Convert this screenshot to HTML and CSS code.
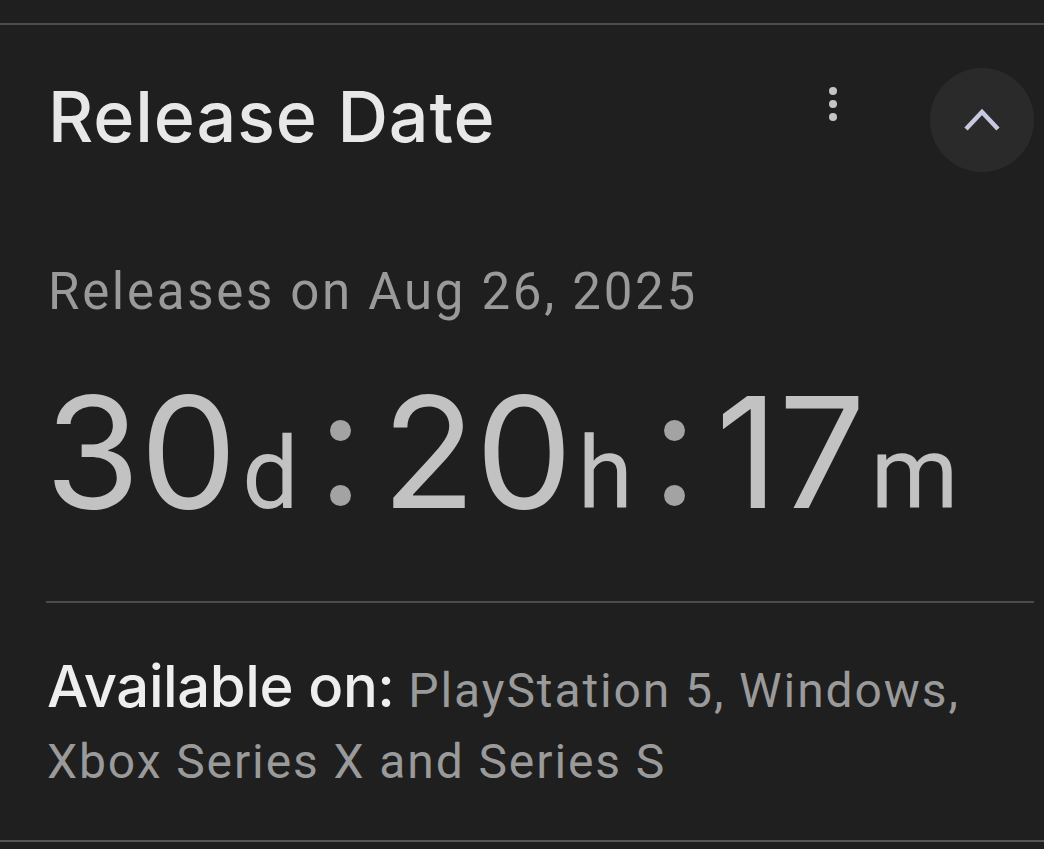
FILE: index.html
```html
<!DOCTYPE html>
<html lang="en">
<head>
<meta charset="utf-8">
<title>Release Date</title>
<link rel="stylesheet" href="styles.css">
</head>
<body>
<section class="card">
  <header class="card-header">
    <h2 class="title">Release Date</h2>
    <div class="actions">
      <button class="menu-btn" aria-label="More options">
        <span class="dot"></span><span class="dot"></span><span class="dot"></span>
      </button>
      <button class="collapse-btn" aria-label="Collapse">
        <svg width="40" height="30" viewBox="0 0 40 30">
          <polyline points="4,24 20,7 36,24" fill="none" stroke="#c6c9e0" stroke-width="4.5"/>
        </svg>
      </button>
    </div>
  </header>
  <div class="body">
    <p class="subtitle">Releases on Aug 26, 2025</p>
    <div class="countdown">
      <span class="num">30</span><span class="unit">d</span>
      <span class="colon"><i></i><i></i></span>
      <span class="num">20</span><span class="unit">h</span>
      <span class="colon"><i></i><i></i></span>
      <span class="num">17</span><span class="unit">m</span>
    </div>
  </div>
  <hr class="divider">
  <p class="platforms"><strong>Available on:</strong> PlayStation 5, Windows, Xbox Series X and Series S</p>
</section>
</body>
</html>
```
FILE: styles.css
```css
html, body {
  margin: 0;
  padding: 0;
  background: #1f1f1f;
}
body {
  font-family: Roboto, "Liberation Sans", sans-serif;
  color: #9a9a9a;
  width: 1044px;
  height: 849px;
  overflow: hidden;
}
.card {
  margin-top: 23px;
  border-top: 2px solid #4a4c50;
  border-bottom: 2px solid #55575b;
  height: 815px;
}
.card-header {
  display: flex;
  align-items: center;
  padding: 43px 10px 0 48px;
  height: 104px;
}
.title {
  margin: -7px 0 0;
  font-family: Inter, "Open Sans", sans-serif;
  font-weight: 500;
  font-size: 70px;
  line-height: 104px;
  color: #e8e8e8;
  letter-spacing: 0.9px;
}
.actions {
  margin-left: auto;
  display: flex;
  align-items: center;
  gap: 92px;
}
.menu-btn {
  display: flex;
  flex-direction: column;
  align-items: center;
  gap: 4.5px;
  background: none;
  border: 0;
  padding: 0;
  margin-top: -32px;
  width: 10px;
}
.dot {
  width: 8.5px;
  height: 8.5px;
  border-radius: 50%;
  background: #c4c4c4;
}
.collapse-btn {
  width: 104px;
  height: 104px;
  border-radius: 50%;
  background: #2a2a2a;
  border: 0;
  padding: 0;
  display: flex;
  align-items: center;
  justify-content: center;
}
.body {
  padding-left: 48px;
}
.subtitle {
  margin: 90px 0 0;
  font-size: 51px;
  line-height: 60px;
  letter-spacing: 2.7px;
  color: #9a9a9a;
}
.countdown {
  display: flex;
  align-items: baseline;
  margin: 50px 0 0 -3px;
  height: 160px;
  color: #c2c2c2;
}
.num {
  font-family: Inter, "Open Sans", sans-serif;
  font-size: 154px;
  line-height: 160px;
  font-weight: 400;
  letter-spacing: 0;
}
.unit {
  font-family: Roboto, sans-serif;
  font-size: 100px;
  line-height: 160px;
  margin-left: 5px;
}
.colon {
  display: inline-flex;
  flex-direction: column;
  gap: 44px;
  margin: 0 31px;
  align-self: flex-end;
  padding-bottom: 26px;
}
.colon i {
  width: 21px;
  height: 21px;
  border-radius: 50%;
  background: #a3a3a3;
}
.divider {
  margin: 69px 10px 0 46px;
  border: 0;
  height: 2px;
  background: #4a4c50;
}
.platforms {
  margin: 48px 40px 0 47px;
  font-size: 48px;
  line-height: 71px;
  letter-spacing: 1.9px;
  color: #9a9a9a;
}
.platforms strong {
  font-family: Inter, "Open Sans", sans-serif;
  font-weight: 500;
  font-size: 58px;
  color: #eeeeee;
  letter-spacing: -0.4px;
}
```
